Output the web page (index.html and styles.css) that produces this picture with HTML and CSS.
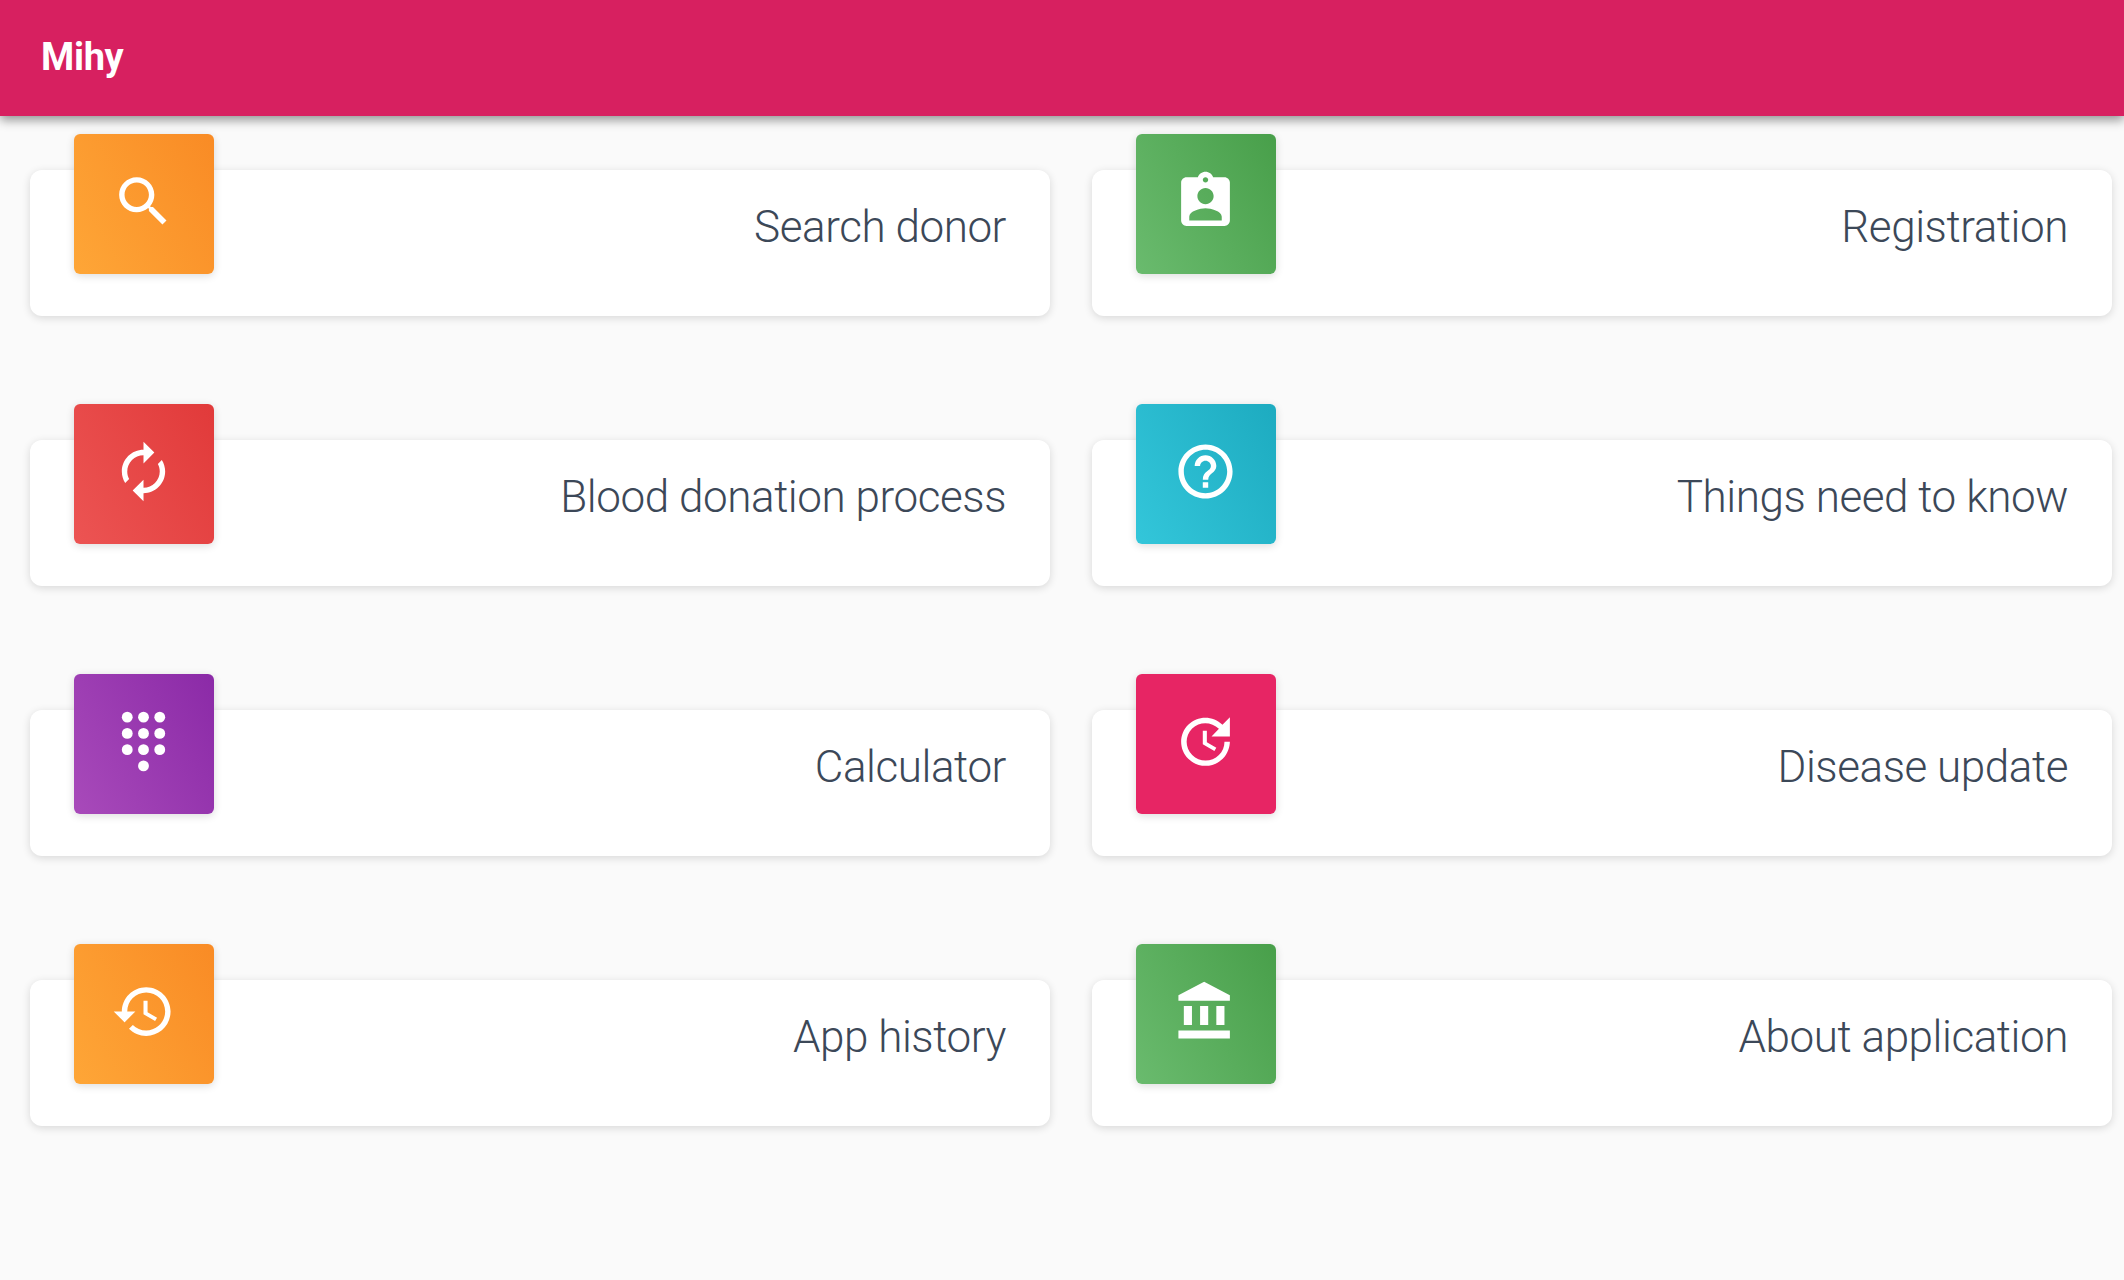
FILE: index.html
```html
<!DOCTYPE html>
<html lang="en">
<head>
<meta charset="utf-8">
<title>Mihy</title>
<link rel="stylesheet" href="styles.css">
</head>
<body>
<header class="navbar"><h1 class="brand">Mihy</h1></header>
<main class="grid">
  <a class="card">
    <span class="tile orange"><svg class="icon" viewBox="0 0 24 24"><path d="M15.5 14h-.79l-.28-.27C15.41 12.59 16 11.11 16 9.5 16 5.91 13.09 3 9.5 3S3 5.91 3 9.5 5.91 16 9.5 16c1.61 0 3.09-.59 4.23-1.57l.27.28v.79l5 4.99L20.49 19l-4.99-5zm-6 0C7.01 14 5 11.99 5 9.5S7.01 5 9.5 5 14 7.01 14 9.5 11.99 14 9.5 14z"/></svg></span>
    <h3 class="title">Search donor</h3>
  </a>
  <a class="card">
    <span class="tile green"><svg class="icon" viewBox="0 0 24 24"><path d="M19 3h-4.18C14.4 1.84 13.3 1 12 1c-1.3 0-2.4.84-2.82 2H5c-1.1 0-2 .9-2 2v14c0 1.100.9 2 2 2h14c1.100 0 2-.9 2-2V5c0-1.100-.9-2-2-2zm-7 0c.55 0 1 .45 1 1s-.45 1-1 1-1-.45-1-1 .45-1 1-1zm0 4c1.660 0 3 1.340 3 3s-1.340 3-3 3-3-1.340-3-3 1.340-3 3-3zm6 12H6v-1.400c0-2 4-3.100 6-3.100s6 1.100 6 3.100V19z"/></svg></span>
    <h3 class="title">Registration</h3>
  </a>
  <a class="card">
    <span class="tile red"><svg class="icon" viewBox="0 0 24 24"><path d="M12 6v3l4-4-4-4v3c-4.420 0-8 3.580-8 8 0 1.570.46 3.030 1.240 4.260L6.700 14.800c-.45-.83-.7-1.790-.7-2.800 0-3.310 2.690-6 6-6zm6.760 1.740L17.300 9.200c.44.84.7 1.790.7 2.800 0 3.310-2.690 6-6 6v-3l-4 4 4 4v-3c4.420 0 8-3.580 8-8 0-1.570-.46-3.030-1.240-4.260z"/></svg></span>
    <h3 class="title">Blood donation process</h3>
  </a>
  <a class="card">
    <span class="tile cyan"><svg class="icon" viewBox="0 0 24 24"><path d="M11 18h2v-2h-2v2zm1-16C6.480 2 2 6.480 2 12s4.480 10 10 10 10-4.480 10-10S17.520 2 12 2zm0 18c-4.410 0-8-3.590-8-8s3.590-8 8-8 8 3.590 8 8-3.590 8-8 8zm0-14c-2.210 0-4 1.790-4 4h2c0-1.100.9-2 2-2s2 .9 2 2c0 2-3 1.750-3 5h2c0-2.250 3-2.500 3-5 0-2.210-1.790-4-4-4z"/></svg></span>
    <h3 class="title">Things need to know</h3>
  </a>
  <a class="card">
    <span class="tile purple"><svg class="icon" viewBox="0 0 24 24"><circle cx="6" cy="3" r="2"/><circle cx="12" cy="3" r="2"/><circle cx="18" cy="3" r="2"/><circle cx="6" cy="9" r="2"/><circle cx="12" cy="9" r="2"/><circle cx="18" cy="9" r="2"/><circle cx="6" cy="15" r="2"/><circle cx="12" cy="15" r="2"/><circle cx="18" cy="15" r="2"/><circle cx="12" cy="21" r="2"/></svg></span>
    <h3 class="title">Calculator</h3>
  </a>
  <a class="card">
    <span class="tile pink"><svg class="icon" viewBox="0 0 24 24"><path d="M21 10.120h-6.780l2.740-2.820c-2.730-2.700-7.150-2.800-9.880-.1-2.730 2.710-2.730 7.080 0 9.790s7.150 2.710 9.880 0C18.320 15.650 19 14.080 19 12.100h2c0 1.980-.88 4.550-2.640 6.290-3.510 3.480-9.210 3.480-12.720 0-3.500-3.470-3.530-9.110-.02-12.580s9.140-3.470 12.650 0L21 3v7.120zM12.500 8v4.250l3.500 2.080-.72 1.210L11 13V8h1.500z"/></svg></span>
    <h3 class="title">Disease update</h3>
  </a>
  <a class="card">
    <span class="tile orange"><svg class="icon" viewBox="0 0 24 24"><path d="M13 3c-4.970 0-9 4.030-9 9H1l3.890 3.890.07.14L9 12H6c0-3.870 3.130-7 7-7s7 3.130 7 7-3.130 7-7 7c-1.930 0-3.680-.79-4.940-2.060l-1.420 1.420C8.270 19.990 10.510 21 13 21c4.970 0 9-4.030 9-9s-4.030-9-9-9zm-1 5v5l4.280 2.540.72-1.210-3.500-2.080V8H12z"/></svg></span>
    <h3 class="title">App history</h3>
  </a>
  <a class="card">
    <span class="tile green"><svg class="icon" viewBox="0 0 24 24"><path d="M4 10v7h3v-7H4zm6 0v7h3v-7h-3zM2 22h19v-3H2v3zm14-12v7h3v-7h-3zm-4.500-9L2 6v2h19V6l-9.500-5z"/></svg></span>
    <h3 class="title">About application</h3>
  </a>
</main>
</body>
</html>
```
FILE: styles.css
```css
body {
  margin: 0;
  min-height: 100vh;
  background: #fafafa;
  font-family: Roboto, sans-serif;
}

.navbar {
  position: relative;
  display: flex;
  align-items: center;
  box-sizing: border-box;
  height: 116px;
  padding: 0 41px 3px;
  background: #d72060;
  box-shadow: 0 4px 10px rgba(0, 0, 0, 0.42);
}

.brand {
  margin: 0;
  color: #fff;
  font-size: 38px;
  font-weight: 700;
  letter-spacing: -0.35px;
}

.grid {
  display: grid;
  grid-template-columns: 1fr 1fr;
  gap: 124px 42px;
  padding: 54px 12px 0 30px;
}

.card {
  display: flex;
  justify-content: space-between;
  box-sizing: border-box;
  height: 146px;
  padding: 0 44px;
  border-radius: 12px;
  background: #fff;
  box-shadow: 0 2px 8px rgba(0, 0, 0, 0.14);
}

.tile {
  display: flex;
  align-items: center;
  justify-content: center;
  width: 140px;
  height: 140px;
  margin-top: -36px;
  border-radius: 6px;
  box-shadow: 0 2px 8px rgba(0, 0, 0, 0.14);
}

.icon {
  width: 65px;
  height: 65px;
  margin: 0 0.5px 5px 0;
  fill: #fff;
}

.card:nth-child(odd) .icon {
  margin-right: 1.5px;
}

.orange { background: linear-gradient(60deg, #fea637, #f98b25); }
.green { background: linear-gradient(60deg, #6abb6e, #489f4a); }
.red { background: linear-gradient(60deg, #ec5453, #e13a3a); }
.cyan { background: linear-gradient(60deg, #33c6da, #1dabc0); }
.purple { background: linear-gradient(60deg, #a84aba, #8b2aa7); }
.pink { background: #e72564; }

.title {
  margin: 26px 0 0;
  color: #3c4858;
  font-size: 44px;
  font-weight: 300;
  line-height: 63px;
  letter-spacing: -0.44px;
}
```
